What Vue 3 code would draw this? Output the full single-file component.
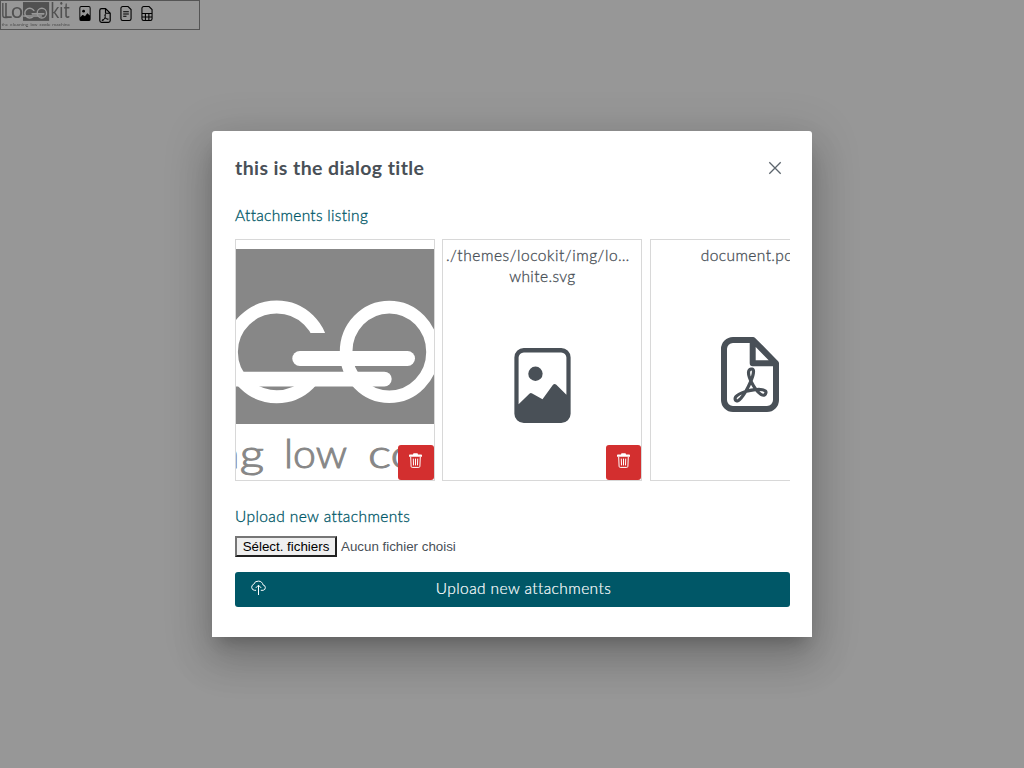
<script setup>
import { h } from 'vue'

const pdfGlyph = 'M4.603 14.087a.81.81 0 0 1-.438-.42c-.195-.388-.13-.776.08-1.102.198-.307.526-.568.897-.787a7.68 7.68 0 0 1 1.482-.645 19.697 19.697 0 0 0 1.062-2.227 7.269 7.269 0 0 1-.43-1.295c-.086-.4-.119-.796-.046-1.136.075-.354.274-.672.65-.823.192-.077.4-.12.602-.077a.7.7 0 0 1 .477.365c.088.164.12.356.127.538.007.188-.012.396-.047.614-.084.51-.27 1.134-.52 1.794a10.954 10.954 0 0 0 .98 1.686 5.753 5.753 0 0 1 1.334.05c.364.066.734.195.96.465.12.144.193.32.2.518.007.192-.047.382-.138.563a1.04 1.04 0 0 1-.354.416.856.856 0 0 1-.51.138c-.331-.014-.654-.196-.933-.417a5.712 5.712 0 0 1-.911-.95 11.651 11.651 0 0 0-1.997.406 11.307 11.307 0 0 1-1.02 1.51c-.292.35-.609.656-.927.787a.793.793 0 0 1-.58.029zm1.379-1.901c-.166.076-.32.156-.459.238-.328.194-.541.383-.647.547-.094.145-.096.25-.04.361.01.022.02.036.026.044a.266.266 0 0 0 .035-.012c.137-.056.355-.235.635-.572a8.18 8.18 0 0 0 .45-.606zm1.64-1.33a12.71 12.71 0 0 1 1.01-.193 11.744 11.744 0 0 1-.51-.858 20.801 20.801 0 0 1-.5 1.05zm2.446.45c.15.163.296.295.435.41.24.19.407.253.498.256a.107.107 0 0 0 .07-.015.307.307 0 0 0 .094-.125.436.436 0 0 0 .059-.2.095.095 0 0 0-.026-.063c-.052-.062-.2-.152-.518-.209a3.876 3.876 0 0 0-.612-.053zM8.078 7.8a6.7 6.7 0 0 0 .2-.828c.031-.188.043-.343.038-.465a.613.613 0 0 0-.032-.198.517.517 0 0 0-.145.04c-.087.035-.158.106-.196.283-.04.192-.03.469.046.822.024.111.054.227.09.346z'

const t = (x, y, size, len, text, weight = 300) =>
  h('text', { x, y, 'font-size': size, textLength: len, lengthAdjust: 'spacingAndGlyphs', 'font-family': 'Lato, sans-serif', 'font-weight': weight, fill: '#878787', stroke: '#878787', 'stroke-width': weight === 300 ? 1 : 0 }, text)

// Brand mark: grey tile with interlocked rings, wordmark and tagline
const BrandLogo = () =>
  h('svg', { viewBox: '0 0 650 240' }, [
    h('path', { d: 'M17 18V132Q17 153 38 153H60', fill: 'none', stroke: '#878787', 'stroke-width': 13 }),
    t(26, 157, 200, 76, 'L', 400),
    t(92, 157, 195, 112, 'o', 400),
    t(460, 157, 195, 178, 'kit', 400),
    h('rect', { x: 204, y: 9, width: 243, height: 175, fill: '#878787' }),
    h('ellipse', { cx: 266.7, cy: 111.9, rx: 45.3, ry: 44.8, fill: 'none', stroke: '#fff', 'stroke-width': 13 }),
    h('rect', { x: 282, y: 93, width: 38, height: 53, fill: '#878787' }),
    h('ellipse', { cx: 379.3, cy: 111.9, rx: 43.2, ry: 44.8, fill: 'none', stroke: '#fff', 'stroke-width': 12.6 }),
    h('rect', { x: 282.3, y: 111, width: 122.7, height: 15, rx: 7.5, fill: '#fff' }),
    h('rect', { x: 204, y: 131.7, width: 177.7, height: 14.8, rx: 7.4, fill: '#fff' }),
    t(8, 228, 40, 56, 'the'),
    t(86, 228, 40, 168, 'cleaning'),
    t(274, 228, 40, 63, 'low'),
    t(358, 228, 40, 102, 'code'),
    t(476, 228, 40, 166, 'machine')
  ])

const attachments = [
  { kind: 'logo', removable: true },
  { kind: 'image', lines: ['./themes/locokit/img/lo…', 'white.svg'], removable: true },
  { kind: 'pdf', lines: ['document.pdf'] }
]
</script>

<template>
  <div class="page">
    <div class="strip">
      <BrandLogo class="strip-logo" />
      <svg class="mini" viewBox="0 0 12 16">
        <path fill-rule="evenodd" d="M2 0h8a2 2 0 0 1 2 2v12a2 2 0 0 1-2 2H2a2 2 0 0 1-2-2V2a2 2 0 0 1 2-2zm0 1a1 1 0 0 0-1 1v9.9l2.2-2.2q.3-.2.6 0L6 11l2.2-3.1q.3-.4.7 0L11 10V2a1 1 0 0 0-1-1z" />
        <circle cx="4.5" cy="5.5" r="1.5" />
      </svg>
      <svg class="mini mini-pdf" viewBox="0 0 58 75">
        <path class="outline" d="M12 3H32L55 26.3V63a9 9 0 0 1-9 9H12a9 9 0 0 1-9-9V12a9 9 0 0 1 9-9zM31.7 3V26.3H55" />
        <path transform="translate(-4.9 7.6) scale(4.3 4.1)" :d="pdfGlyph" />
      </svg>
      <svg class="mini lines" viewBox="0 0 12 16">
        <path d="M2.4.6H8.2L11.4 3.8V13.6A1.8 1.8 0 0 1 9.6 15.4H2.4A1.8 1.8 0 0 1 .6 13.6V2.4A1.8 1.8 0 0 1 2.4.6zM3 6.2h6M3 8.6h6M3 11h3.5" />
      </svg>
      <svg class="mini lines" viewBox="0 0 12 16">
        <path d="M2.4.6H8.2L11.4 3.8V13.6A1.8 1.8 0 0 1 9.6 15.4H2.4A1.8 1.8 0 0 1 .6 13.6V2.4A1.8 1.8 0 0 1 2.4.6zM1 8h10M1 11.8h10M4.3 8v7.5M8 8v7.5" />
      </svg>
    </div>

    <section class="dialog">
      <header class="head">
        <h3 class="title">this is the dialog title</h3>
        <svg class="close" viewBox="0 0 14 14"><path d="M1.3 1.3 12.7 12.7M12.7 1.3 1.3 12.7" /></svg>
      </header>

      <p class="label listing">Attachments listing</p>
      <div class="cards">
        <article v-for="item in attachments" :key="item.kind" class="card">
          <BrandLogo v-if="item.kind === 'logo'" class="card-logo" />
          <template v-else>
            <div class="name" :class="item.kind">
              <div v-for="line in item.lines" :key="line">{{ line }}</div>
            </div>
            <svg v-if="item.kind === 'image'" class="big image-icon" viewBox="0 0 12 16">
              <path fill-rule="evenodd" d="M2 0h8a2 2 0 0 1 2 2v12a2 2 0 0 1-2 2H2a2 2 0 0 1-2-2V2a2 2 0 0 1 2-2zm0 .95a1.1 1.1 0 0 0-1.1 1.1V12l2.3-2.25q.3-.25.6-.05L6 10.95l2.2-3.05q.35-.45.75-.05L11.1 9.95V2.05A1.1 1.1 0 0 0 10 .95z" />
              <circle cx="4.5" cy="5.5" r="1.53" />
            </svg>
            <svg v-else class="big pdf-icon" viewBox="0 0 58 75">
              <path class="outline" d="M12 3H32L55 26.3V63a9 9 0 0 1-9 9H12a9 9 0 0 1-9-9V12a9 9 0 0 1 9-9zM31.7 3V26.3H55" />
              <path transform="translate(-4.9 7.6) scale(4.3 4.1)" :d="pdfGlyph" />
            </svg>
          </template>
          <button v-if="item.removable" class="trash">
            <svg viewBox="0 0 13 15">
              <path class="fill" d="M4 1.5Q4 .2 5 .2H8Q9 .2 9 1.5H12.2Q13 1.5 13 2.3V3.8H0V2.3Q0 1.5.8 1.5z" />
              <path class="line" d="M1.7 3.8 2.1 13.3Q2.2 14.4 3.2 14.4H9.8Q10.8 14.4 10.9 13.3L11.3 3.8M4.3 5.6 4.5 12.4M6.5 5.6V12.4M8.7 5.6 8.5 12.4" />
            </svg>
          </button>
        </article>
      </div>

      <p class="label upload-label">Upload new attachments</p>
      <div class="file">
        <span class="file-btn">Sélect. fichiers</span>
        <span class="file-none">Aucun fichier choisi</span>
      </div>
      <button class="submit">
        <svg viewBox="0 0 16 16">
          <path d="M5.6 10.3H4A3.1 3.1 0 0 1 3.2 4.3 4.7 4.7 0 0 1 8 1.1C10.4 1.1 12.2 2.8 12.5 4.9A2.75 2.75 0 0 1 12.7 10.3H10.3M8 15V5.4M5.3 7.9 8 5.2 10.7 7.9" />
        </svg>
        <span class="submit-text">Upload new attachments</span>
      </button>
    </section>
  </div>
</template>

<style>
body {
  margin: 0;
  background: #979797;
}
</style>

<style scoped>
.page {
  box-sizing: border-box;
  width: 1024px;
  height: 768px;
  overflow: hidden;
  display: grid;
  grid-template-rows: 30px 101px auto;
  justify-items: center;
  align-items: start;
  background: #979797;
  font-family: Lato, "Open Sans", sans-serif;
  font-size: 15.5px;
  font-weight: 300;
  line-height: 21px;
  color: #495057;
}
.strip {
  box-sizing: border-box;
  width: 200px;
  height: 30px;
  justify-self: start;
  border: 1px solid #555;
  display: flex;
  align-items: flex-start;
  gap: 8.7px;
}
.strip-logo {
  width: 70px;
  height: 26px;
  margin-right: -1.2px;
  filter: brightness(.6);
}
.mini {
  width: 12px;
  height: 15px;
  margin-top: 5px;
  fill: #000;
}
.mini-pdf { margin-top: 7px; margin-left: -.5px; }
.outline { fill: none; stroke: #495057; stroke-width: 6; stroke-linejoin: round; }
.mini .outline { stroke: #000; }
.lines { fill: none; stroke: #000; stroke-width: 1.15; margin-left: .3px; }
.dialog {
  grid-row: 3;
  box-sizing: border-box;
  width: 600px;
  height: 506px;
  padding: 22px 22px 30px 23px;
  background: #fff;
  border-radius: 3px 3px 0 0;
  box-shadow: 0 11px 15px -7px rgba(0, 0, 0, .2), 0 24px 38px 3px rgba(0, 0, 0, .14), 0 9px 46px 8px rgba(0, 0, 0, .12);
  display: flex;
  flex-direction: column;
}
.head {
  display: flex;
  align-items: center;
  justify-content: space-between;
  height: 30px;
}
.title {
  margin: -2px 0 0;
  font-size: 19.5px;
  font-weight: 700;
  letter-spacing: .4px;
}
.close {
  width: 14px;
  height: 14px;
  margin-right: 8px;
  stroke: #5c656d;
  stroke-width: 1.3;
}
.label {
  margin: 0;
  color: #005767;
  height: 21px;
  letter-spacing: .3px;
  -webkit-text-stroke: .3px;
}
.listing { margin-top: 22px; }
.cards {
  margin-top: 13px;
  height: 242px;
  display: flex;
  gap: 7.5px;
  overflow: hidden;
}
.card {
  box-sizing: border-box;
  flex: 0 0 200px;
  height: 242px;
  border: 1px solid #d8d8d8;
  position: relative;
  overflow: hidden;
  display: flex;
  flex-direction: column;
  align-items: center;
}
.card:nth-child(2) { margin-left: -.1px; }
.card-logo {
  flex: none;
  width: 650px;
  height: 240px;
}
.name {
  margin-top: 5px;
  text-align: center;
  white-space: nowrap;
  letter-spacing: .4px;
  -webkit-text-stroke: .3px;
}
.name.image { margin-left: -9px; }
.name.image div:first-child { letter-spacing: .55px; }
.name.image div:last-child { margin-left: 9px; }
.big { fill: #495057; }
.image-icon { width: 57px; height: 75px; margin-top: 61px; }
.pdf-icon { width: 58px; height: 75px; margin-top: 71px; }
.trash {
  position: absolute;
  right: 0;
  bottom: 0;
  width: 36px;
  height: 35px;
  padding: 0;
  border: 0;
  border-radius: 3px;
  background: #d32f2f;
}
.card:nth-child(2) .trash { width: 35.4px; }
.trash svg {
  display: block;
  width: 13px;
  height: 15px;
  margin: -4px auto 0 11px;
}
.trash .fill { fill: #fff; }
.trash .line { fill: none; stroke: #fff; stroke-width: 1; }
.upload-label { margin-top: 25px; letter-spacing: .4px; }
.file {
  margin-top: 9px;
  height: 21px;
  display: flex;
  align-items: center;
  gap: 4px;
  font: 13.333px/15px "Liberation Sans", Arial, sans-serif;
}
.file-btn {
  box-sizing: border-box;
  width: 102px;
  height: 21px;
  padding: 1px 0;
  text-align: center;
  color: #000;
  background: #efefef;
  border: 2px solid;
  border-color: #767676 #212121 #212121 #767676;
}
.submit {
  margin-top: 15px;
  height: 35px;
  padding: 0 10px 2px 15px;
  border: 0;
  border-radius: 3px;
  background: #005767;
  color: #fff;
  display: flex;
  align-items: center;
  font: 300 15.5px/21px Lato, "Open Sans", sans-serif;
  letter-spacing: .4px;
  -webkit-text-stroke: .2px;
}
.submit svg {
  width: 17px;
  height: 16px;
  margin-top: -1px;
  fill: none;
  stroke: #fff;
  stroke-width: 1;
}
.submit-text { flex: 1; text-align: center; }
</style>
